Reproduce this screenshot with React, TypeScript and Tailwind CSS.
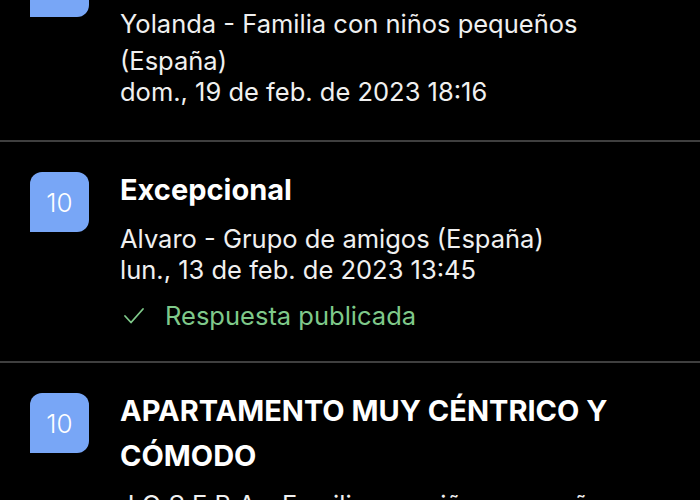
const reviews = [
  {
    score: "10",
    title: "Muy bien",
    name: "Yolanda - Familia con niños pequeños (España)",
    date: "dom., 19 de feb. de 2023 18:16",
    replied: false,
    pb: "pb-[36px]",
  },
  {
    score: "10",
    title: "Excepcional",
    name: "Alvaro - Grupo de amigos (España)",
    date: "lun., 13 de feb. de 2023 13:45",
    replied: true,
    pb: "pb-[29px]",
  },
  {
    score: "10",
    title: "APARTAMENTO MUY CÉNTRICO Y CÓMODO",
    name: "J O S E B A - Familia con niños pequeños (España)",
    date: "sáb., 11 de feb. de 2023 20:02",
    replied: false,
    pb: "pb-[30px]",
  },
];

function CheckIcon() {
  return (
    <svg width="22" height="18" viewBox="0 0 22 18" fill="none" className="shrink-0">
      <polyline
        points="2,9 8,15.5 20,2"
        stroke="#7fc98a"
        strokeWidth="1.8"
        strokeLinecap="round"
        strokeLinejoin="round"
      />
    </svg>
  );
}

export default function App() {
  return (
    <main
      className="w-[700px] h-[500px] overflow-hidden bg-black text-white"
      style={{ fontFamily: "Inter, 'Noto Sans', 'Liberation Sans', sans-serif" }}
    >
      <div className="-mt-[73px]">
        {reviews.map((r, i) => (
          <section
            key={i}
            className={`flex gap-[31px] px-[30px] pt-[30px] ${r.pb} border-b-2 border-[#3f3f3f]`}
          >
            {/* score badge */}
            <div className="w-[59px] h-[60px] shrink-0 flex items-center justify-center rounded-[12px] rounded-bl-none bg-[#78a6f6] text-[26px] font-light text-white">
              {r.score}
            </div>

            <div className="-mt-[5px] min-w-0 flex-1 pr-[30px]">
              <h2 className="text-[29px] font-bold leading-[45px] text-white">{r.title}</h2>
              <p className="mt-[8px] text-[25.5px] leading-[37px] text-[#f0f0f0]">{r.name}</p>
              <p className="text-[25.5px] leading-[25px] text-[#f0f0f0]">{r.date}</p>
              {r.replied && (
                <div className="mt-[18px] flex items-center gap-[20px] pl-[3px]">
                  <CheckIcon />
                  <span className="text-[25.5px] leading-[32px] text-[#7fc98a]">Respuesta publicada</span>
                </div>
              )}
            </div>
          </section>
        ))}
      </div>
    </main>
  );
}
